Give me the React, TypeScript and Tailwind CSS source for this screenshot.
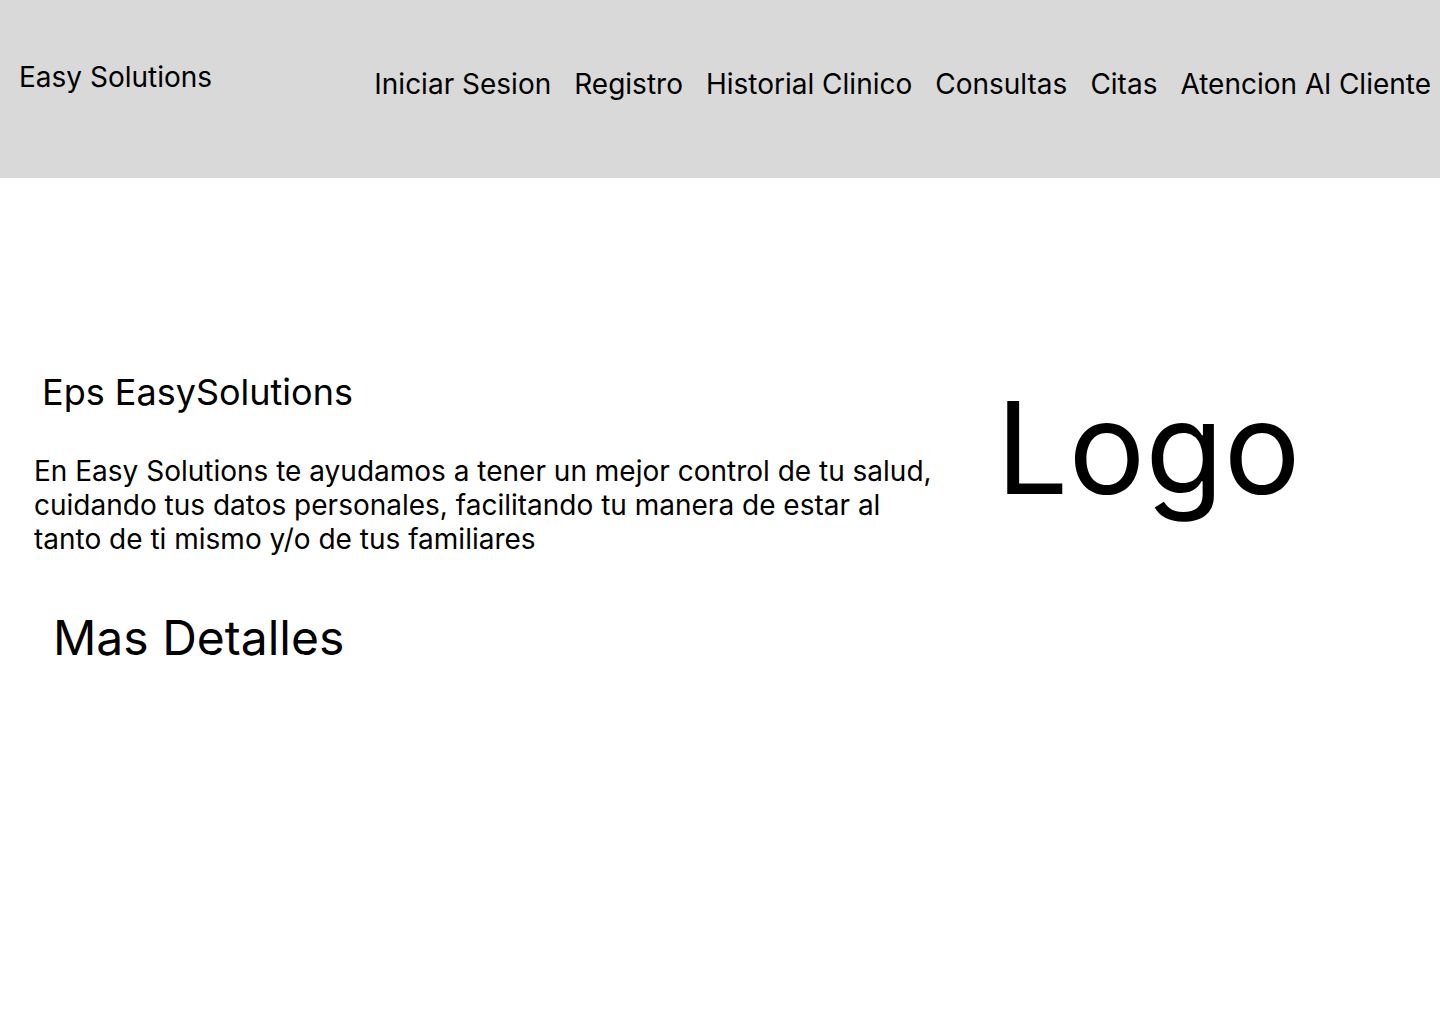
import React from "react";

const navItems = ["Iniciar Sesion", "Registro", "Historial Clinico", "Consultas", "Citas", "Atencion Al Cliente"];

const App = () => {
  return (
    <div className="min-h-screen bg-white text-black font-['Inter',sans-serif]">
      {/* Header */}
      <header className="h-[178px] bg-[#d9d9d9] flex items-start justify-between pl-[19px] pr-[9px]">
        <div className="mt-[61px] text-[28px] leading-[32px]">Easy Solutions</div>
        <nav className="mt-[66px] flex gap-[23px] text-[28px] leading-[36px]">
          {navItems.map((item) => (
            <a key={item} href="#" className="whitespace-nowrap">
              {item}
            </a>
          ))}
        </nav>
      </header>

      {/* Main */}
      <main className="flex">
        <section className="w-[960px] pt-[192px]">
          <h1 className="ml-[42px] text-[36px] leading-[44px]">Eps EasySolutions</h1>
          <p className="ml-[34px] mt-[40px] w-[910px] text-[28px] leading-[34px]">
            En Easy Solutions te ayudamos a tener un mejor control de tu salud, cuidando tus datos personales, facilitando tu manera de estar al tanto de ti mismo y/o de tus familiares
          </p>
          <h2 className="ml-[53px] mt-[54px] text-[48px] leading-[56px]">Mas Detalles</h2>
        </section>
        <section className="pt-[190px] pl-[36px]">
          <div className="text-[128px] leading-[160px]">Logo</div>
        </section>
      </main>
    </div>
  );
};

export default App;
